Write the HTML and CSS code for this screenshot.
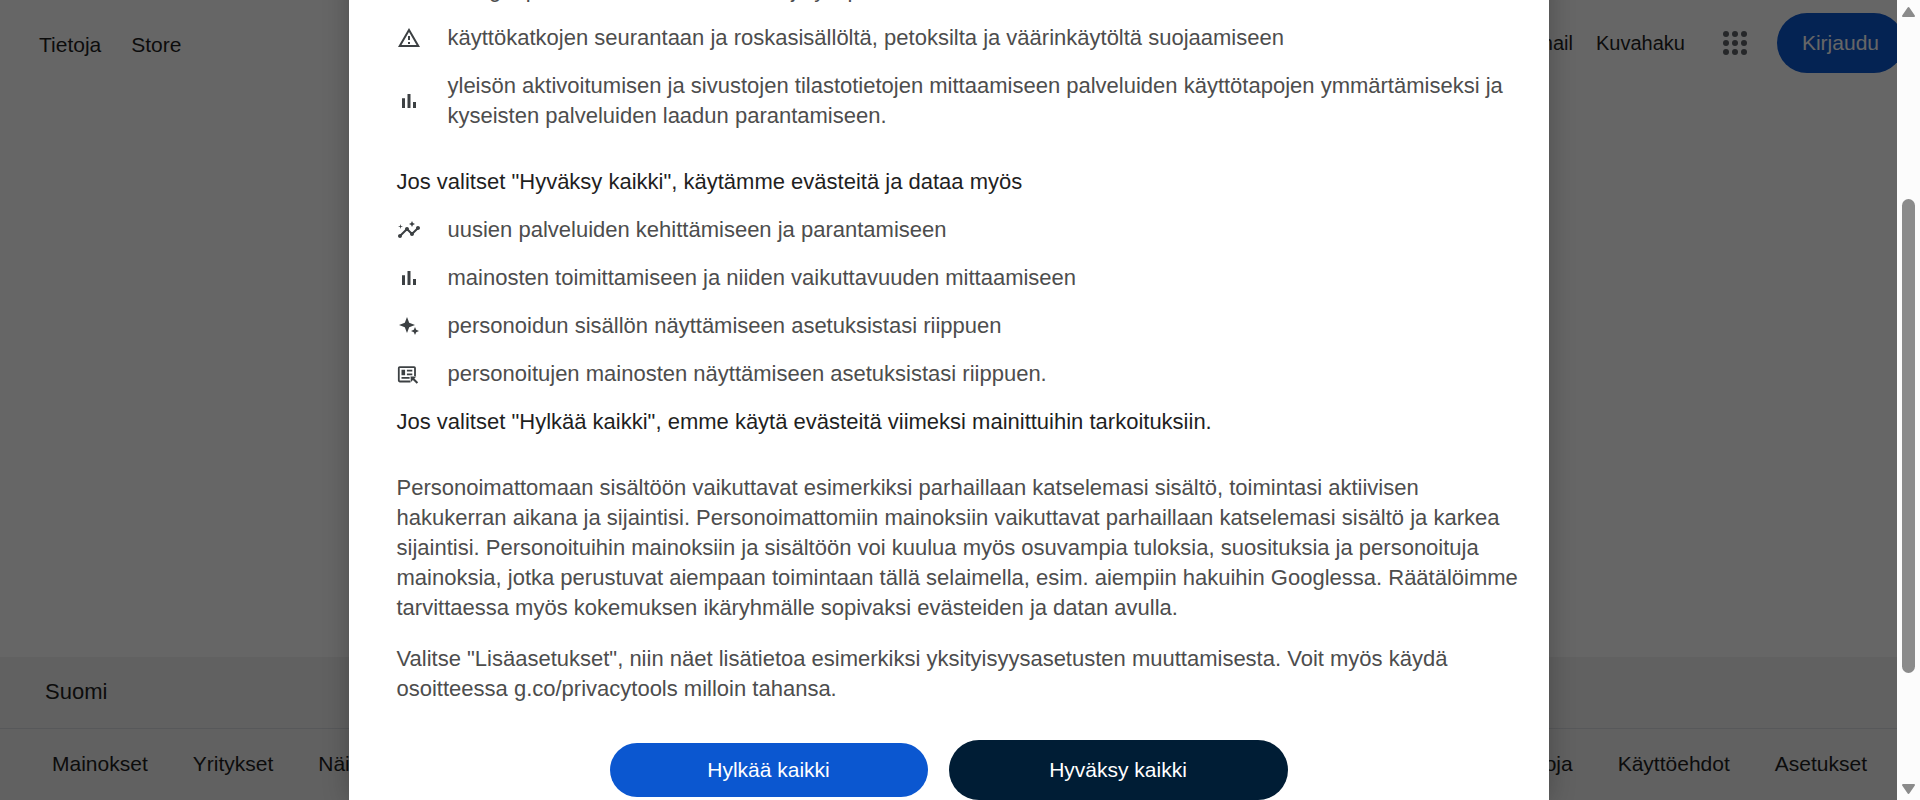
FILE: index.html
```html
<!DOCTYPE html>
<html lang="fi">
<head>
<meta charset="utf-8">
<title>Google</title>
<link rel="stylesheet" href="styles.css">
</head>
<body>
<div class="view">
  <div class="page">
    <header class="topbar">
      <nav class="topbar-left">
        <a href="#">Tietoja</a>
        <a href="#">Store</a>
      </nav>
      <nav class="topbar-right">
        <a href="#">Gmail</a>
        <a href="#">Kuvahaku</a>
        <button class="apps" type="button" aria-label="Google-sovellukset">
          <svg width="24" height="24" viewBox="0 0 24 24"><g fill="currentColor"><circle cx="3" cy="3" r="3"/><circle cx="12" cy="3" r="3"/><circle cx="21" cy="3" r="3"/><circle cx="3" cy="12" r="3"/><circle cx="12" cy="12" r="3"/><circle cx="21" cy="12" r="3"/><circle cx="3" cy="21" r="3"/><circle cx="12" cy="21" r="3"/><circle cx="21" cy="21" r="3"/></g></svg>
        </button>
        <a class="signin" href="#">Kirjaudu</a>
      </nav>
    </header>
    <footer class="footer">
      <div class="country">Suomi</div>
      <div class="footer-links">
        <nav>
          <a href="#">Mainokset</a>
          <a href="#">Yritykset</a>
          <a href="#">Näin Haku toimii</a>
        </nav>
        <nav>
          <a href="#">Tietosuoja</a>
          <a href="#">Käyttöehdot</a>
          <a href="#">Asetukset</a>
        </nav>
      </div>
    </footer>
    <div class="scrim">
      <div class="dialog" role="dialog" aria-modal="true" aria-label="Ennen kuin jatkat Google Hakuun">
        <div class="content">
          <ul class="purposes">
            <li>
              <span class="icon"></span>
              <span>Google-palveluiden toimittamiseen ja ylläpitoon</span>
            </li>
            <li>
              <svg class="icon" viewBox="0 0 24 24"><path d="M12 5.99 19.53 19H4.47L12 5.99M12 2 1 21h22L12 2zm1 14h-2v2h2v-2zm0-6h-2v4h2v-4z"/></svg>
              <span>käyttökatkojen seurantaan ja roskasisällöltä, petoksilta ja väärinkäytöltä suojaamiseen</span>
            </li>
            <li>
              <svg class="icon" viewBox="0 0 24 24"><path d="M5 9.200h3V19H5zM10.500 5h3v14h-3zM16 13h3v6h-3z"/></svg>
              <span>yleisön aktivoitumisen ja sivustojen tilastotietojen mittaamiseen palveluiden käyttötapojen ymmärtämiseksi ja kyseisten palveluiden laadun parantamiseen.</span>
            </li>
          </ul>
          <h2 class="lead">Jos valitset "Hyväksy kaikki", käytämme evästeitä ja dataa myös</h2>
          <ul class="purposes">
            <li>
              <svg class="icon" viewBox="0 0 24 24"><path d="M21 8c-1.45 0-2.26 1.44-1.93 2.51l-3.55 3.56c-.3-.09-.74-.09-1.04 0l-2.55-2.55C12.27 10.45 11.46 9 10 9c-1.45 0-2.27 1.44-1.93 2.52l-4.56 4.55C2.44 15.74 1 16.55 1 18c0 1.1.9 2 2 2 1.45 0 2.26-1.44 1.93-2.51l4.55-4.56c.3.09.74.09 1.04 0l2.55 2.55C12.73 16.55 13.54 18 15 18c1.45 0 2.27-1.44 1.93-2.52l3.56-3.55C21.56 12.26 23 11.45 23 10c0-1.1-.9-2-2-2zM15 9l.94-2.07L18 6l-2.06-.93L15 3l-.92 2.07L12 6l2.08.93zM3.5 11 4 9l2-.5L4 8l-.5-2L3 8l-2 .5L3 9z"/></svg>
              <span>uusien palveluiden kehittämiseen ja parantamiseen</span>
            </li>
            <li>
              <svg class="icon" viewBox="0 0 24 24"><path d="M5 9.200h3V19H5zM10.500 5h3v14h-3zM16 13h3v6h-3z"/></svg>
              <span>mainosten toimittamiseen ja niiden vaikuttavuuden mittaamiseen</span>
            </li>
            <li>
              <svg class="icon" viewBox="0 0 24 24"><path d="M10 3l2.200 5.800L18 11l-5.800 2.200L10 19l-2.200-5.800L2 11l5.800-2.200zM18 13l1.200 2.800L22 17l-2.800 1.200L18 21l-1.200-2.800L14 17l2.800-1.200z"/></svg>
              <span>personoidun sisällön näyttämiseen asetuksistasi riippuen</span>
            </li>
            <li>
              <svg class="icon" viewBox="0 0 24 24"><g transform="translate(0 1.500) scale(.9)"><path d="M3 3h16a2 2 0 0 1 2 2v9h-2V5H3v14h12v2H3a2 2 0 0 1-2-2V5a2 2 0 0 1 2-2z"/><path d="M5 7h4v6H5zm6 0h6v2h-6zm0 4h6v2h-6zM5 15h9v2H5zM15 14.500h6.500l-2.200 2.200 4.200 4.200-1.600 1.600-4.200-4.200-2.200 2.200z"/></g></svg>
              <span>personoitujen mainosten näyttämiseen asetuksistasi riippuen.</span>
            </li>
          </ul>
          <h2 class="lead reject-note">Jos valitset "Hylkää kaikki", emme käytä evästeitä viimeksi mainittuihin tarkoituksiin.</h2>
          <div class="details">
            <p>Personoimattomaan sisältöön vaikuttavat esimerkiksi parhaillaan katselemasi sisältö, toimintasi aktiivisen hakukerran aikana ja sijaintisi. Personoimattomiin mainoksiin vaikuttavat parhaillaan katselemasi sisältö ja karkea sijaintisi. Personoituihin mainoksiin ja sisältöön voi kuulua myös osuvampia tuloksia, suosituksia ja personoituja mainoksia, jotka perustuvat aiempaan toimintaan tällä selaimella, esim. aiempiin hakuihin Googlessa. Räätälöimme tarvittaessa myös kokemuksen ikäryhmälle sopivaksi evästeiden ja datan avulla.</p>
            <p>Valitse "Lisäasetukset", niin näet lisätietoa esimerkiksi yksityisyysasetusten muuttamisesta. Voit myös käydä osoitteessa g.co/privacytools milloin tahansa.</p>
          </div>
        </div>
        <div class="actions">
          <button class="btn reject" type="button">Hylkää kaikki</button>
          <button class="btn accept" type="button">Hyväksy kaikki</button>
        </div>
      </div>
    </div>
  </div>
  <div class="scrollbar" aria-hidden="true">
    <svg width="15" height="12" viewBox="0 0 15 12"><path d="M7.500 2 13 10H2z" fill="#8b8b8b" stroke="#8b8b8b" stroke-width="2" stroke-linejoin="round"/></svg>
    <div class="track"><div class="thumb"></div></div>
    <svg width="15" height="12" viewBox="0 0 15 12"><path d="M7.500 10 2 2h11z" fill="#8b8b8b" stroke="#8b8b8b" stroke-width="2" stroke-linejoin="round"/></svg>
  </div>
</div>
</body>
</html>
```
FILE: styles.css
```css
* {
  box-sizing: border-box;
}

body {
  margin: 0;
  font-family: "Liberation Sans", Arial, sans-serif;
  font-size: 21px;
  line-height: 30px;
  color: #1f1f1f;
  background: #fff;
}

a {
  color: inherit;
  text-decoration: none;
}

button {
  font: inherit;
  border: 0;
  padding: 0;
  cursor: pointer;
}

.view {
  display: flex;
  height: 100vh;
  overflow: hidden;
}

.page {
  position: relative;
  flex: 1;
  min-width: 0;
  display: flex;
  flex-direction: column;
  justify-content: space-between;
  overflow: hidden;
}

.topbar {
  display: flex;
  justify-content: space-between;
  align-items: center;
  padding: 13px 0 0 39px;
}

.topbar-left {
  display: flex;
  gap: 30px;
  padding-top: 3px;
}

.topbar-right {
  display: flex;
  align-items: center;
  gap: 23px;
  font-size: 20px;
}

.apps {
  display: flex;
  margin: 0 7px 0 15px;
  background: none;
  color: #5f6368;
}

.signin {
  margin-right: -7px;
  padding: 15px 25px;
  border-radius: 30px;
  background: #0b57d0;
  color: #fff;
  font-size: 21px;
  white-space: nowrap;
}

.footer {
  background: #f2f2f2;
}

.country {
  padding: 20px 45px 21px;
  border-bottom: 1px solid #dadce0;
  font-size: 22px;
}

.footer-links {
  display: flex;
  justify-content: space-between;
  padding: 20px 30px 21px 52px;
}

.footer-links nav {
  display: flex;
  gap: 45px;
}

.scrim {
  position: absolute;
  inset: 0;
  display: flex;
  align-items: flex-end;
  justify-content: center;
  background: rgba(0, 0, 0, 0.6);
}

.dialog {
  width: 1200px;
  max-width: 100%;
  padding: 0 24px;
  background: #fff;
  box-shadow: 0 0 24px rgba(0, 0, 0, 0.25);
}

.content {
  padding-left: 24px;
  font-size: 22px;
}

.purposes {
  display: flex;
  flex-direction: column;
  gap: 18px;
  margin: 0;
  padding: 0;
  list-style: none;
  color: #4d4d4d;
}

.purposes li {
  display: flex;
  align-items: center;
  gap: 27px;
}

.icon {
  flex: none;
  width: 24px;
  height: 24px;
  fill: #3c4043;
}

.lead {
  margin: 36px 0 18px;
  font-size: 22px;
  font-weight: 400;
}

.reject-note {
  margin: 18px 0 36px;
}

.details {
  display: flex;
  flex-direction: column;
  gap: 21px;
  color: #4d4d4d;
}

.details p {
  margin: 0;
}

.actions {
  display: flex;
  justify-content: center;
  align-items: center;
  gap: 21px;
  margin-top: 36px;
}

.btn {
  border-radius: 30px;
  color: #fff;
}

.reject {
  width: 318px;
  padding: 12px 24px;
  background: #0b57d0;
}

.accept {
  width: 339px;
  padding: 15px 24px;
  background: #001d35;
}

.scrollbar {
  flex: none;
  width: 23px;
  display: flex;
  flex-direction: column;
  align-items: center;
  padding: 6px 0 5px;
  background: #fcfcfc;
}

.track {
  flex: 1;
  display: flex;
  flex-direction: column;
}

.thumb {
  width: 13px;
  height: 62%;
  margin-top: 181px;
  border-radius: 7px;
  background: #8b8b8b;
}
```
